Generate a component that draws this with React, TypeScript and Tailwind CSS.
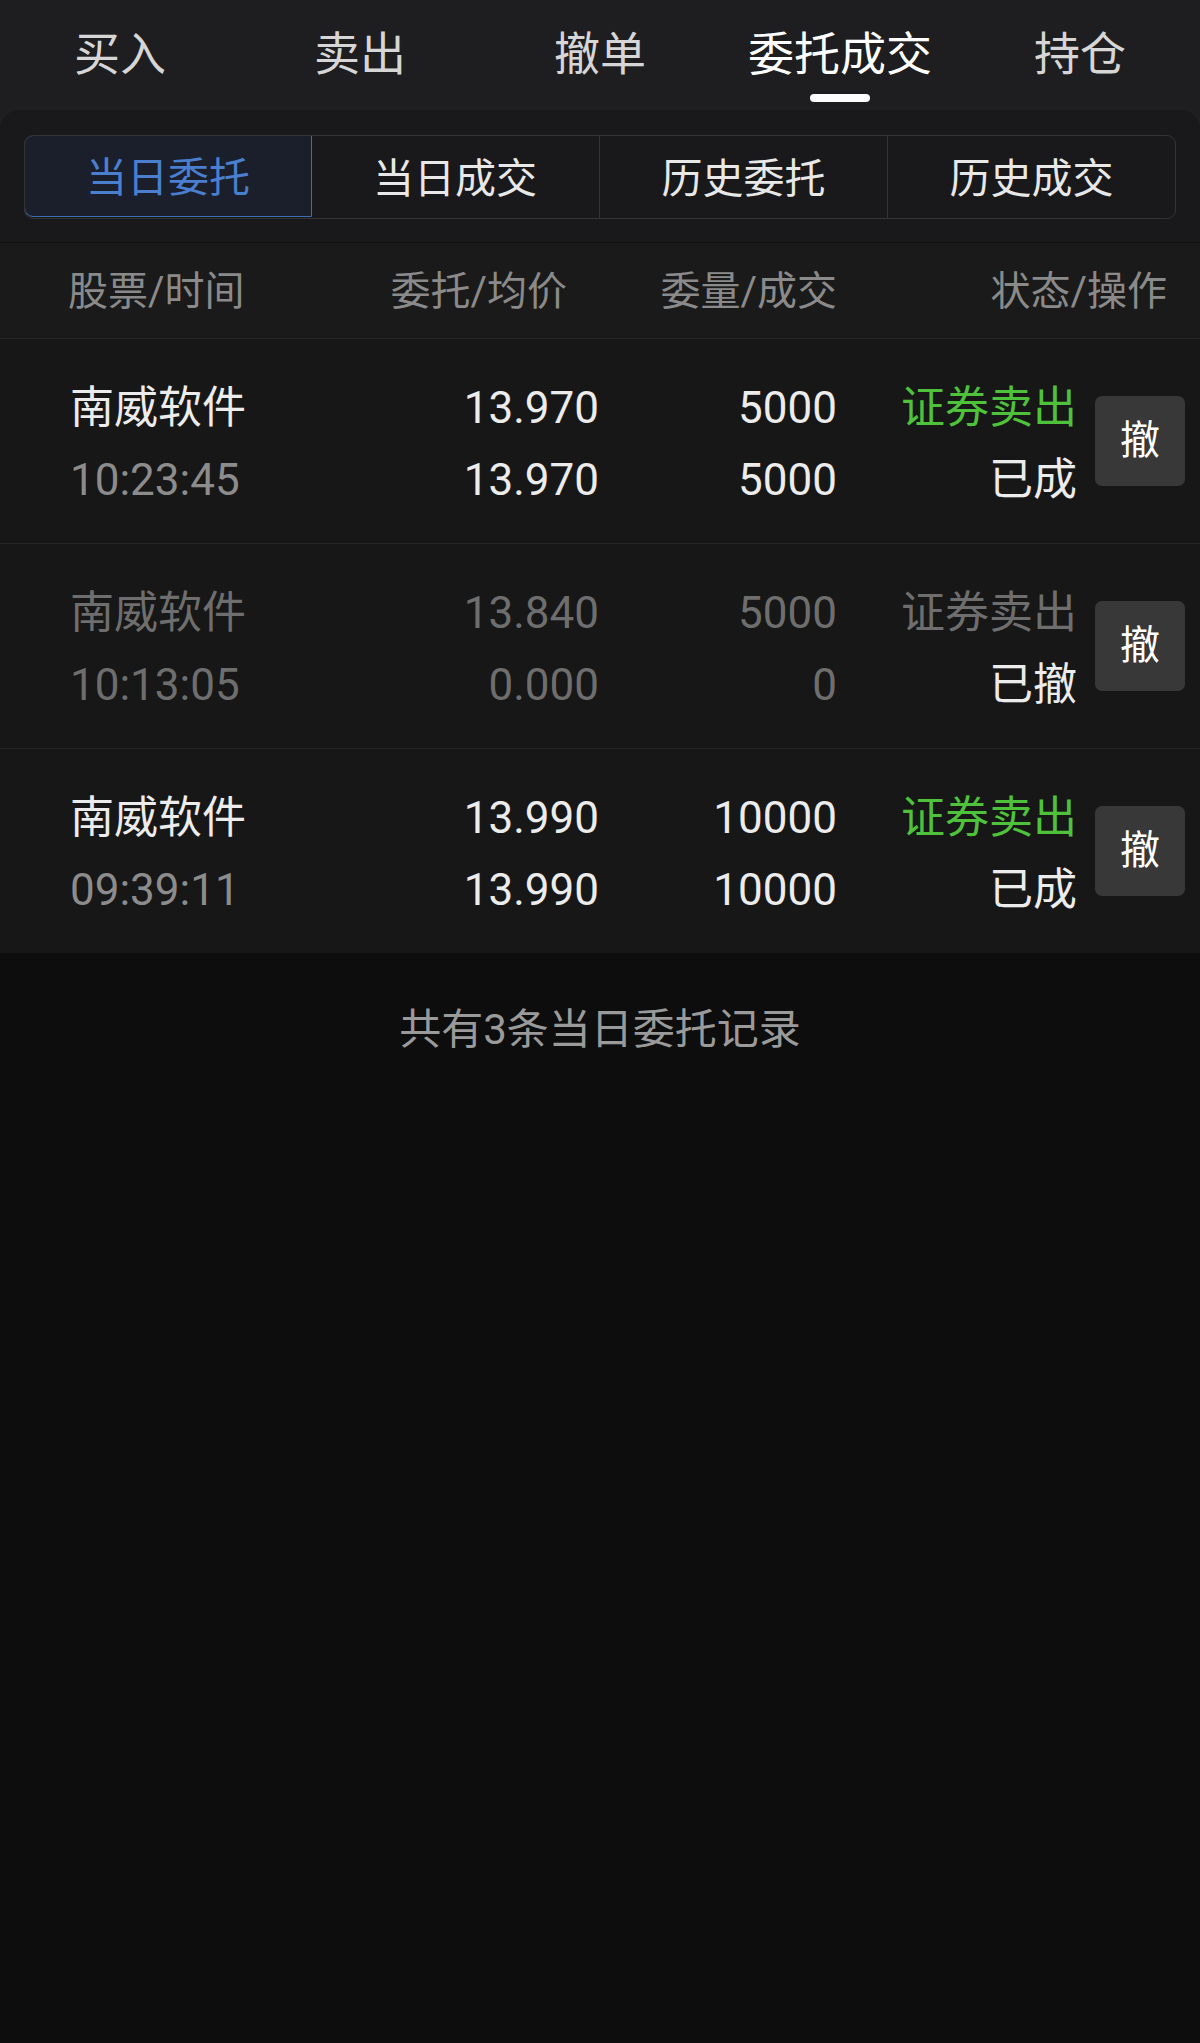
import React from "react";

const FONT = { fontFamily: 'Roboto, "Noto Sans CJK SC", "Noto Sans", sans-serif' };

type Row = {
  name: string;
  time: string;
  price: string;
  avg: string;
  qty: string;
  deal: string;
  status: string;
  state: string;
  dim: boolean;
};

const rows: Row[] = [
  { name: "南威软件", time: "10:23:45", price: "13.970", avg: "13.970", qty: "5000", deal: "5000", status: "证券卖出", state: "已成", dim: false },
  { name: "南威软件", time: "10:13:05", price: "13.840", avg: "0.000", qty: "5000", deal: "0", status: "证券卖出", state: "已撤", dim: true },
  { name: "南威软件", time: "09:39:11", price: "13.990", avg: "13.990", qty: "10000", deal: "10000", status: "证券卖出", state: "已成", dim: false },
];

const tabs = ["买入", "卖出", "撤单", "委托成交", "持仓"];
const segs = ["当日委托", "当日成交", "历史委托", "历史成交"];

export default function App() {
  return (
    <div className="w-[1200px] min-h-[2043px] bg-[#0d0d0d]" style={FONT}>
      {/* top nav */}
      <div className="bg-[#1e1e20] h-[110px] flex">
        {tabs.map((t, i) => (
          <div key={t} className="w-[240px] h-[110px] flex flex-col items-center">
            <div
              className={`h-[56px] mt-[26px] leading-[56px] text-[46px] ${i === 3 ? "text-white" : "text-[#d6d6d6]"}`}
            >
              {t}
            </div>
            {i === 3 && <div className="mt-[12px] w-[60px] h-[8px] rounded-full bg-white" />}
          </div>
        ))}
      </div>

      {/* panel */}
      <div className="bg-[#1e1e20]">
        <div className="bg-[#19191b] rounded-t-[20px] pt-[25px] pb-[23px] px-[24px]">
          <div className="flex h-[84px] rounded-[9px] border border-[#343436] overflow-hidden">
            {segs.map((s, i) =>
              i === 0 ? (
                <div
                  key={s}
                  className="w-[288px] h-full flex items-center justify-center pt-[6px] text-[41px] text-[#4a7fd0] bg-[#1a1f2b] border border-[#3e6cb0] rounded-l-[9px] -m-px"
                >
                  {s}
                </div>
              ) : (
                <div
                  key={s}
                  className={`w-[288px] h-full flex items-center justify-center pt-[6px] text-[41px] text-[#e8e8e8] ${i > 1 ? "border-l border-[#343436]" : ""}`}
                >
                  {s}
                </div>
              )
            )}
          </div>
        </div>
      </div>

      {/* header */}
      <div className="border-t border-[#111112] bg-[#1a1a1a] h-[97px] flex items-center pl-[68px] pt-[2px] text-[40px] text-[#8a8a8a] border-b border-b-[#262626]">
        <div className="w-[232px]">股票/时间</div>
        <div className="w-[267px] text-right">委托/均价</div>
        <div className="w-[270px] text-right">委量/成交</div>
        <div className="w-[330px] text-right">状态/操作</div>
      </div>

      {/* rows */}
      {rows.map((r, idx) => {
        const main = r.dim ? "text-[#6e6e6e]" : "text-[#ececec]";
        const sub = r.dim ? "text-[#6e6e6e]" : "text-[#8c8c8c]";
        const nums = r.dim ? "text-[#6e6e6e]" : "text-[#ececec]";
        return (
          <div
            key={idx}
            className={`bg-[#171717] flex items-center pl-[70px] pt-[33px] pb-[27px] ${idx < rows.length - 1 ? "border-b border-[#262626]" : ""}`}
          >
            <div className="w-[230px] text-[44px] leading-[72px]">
              <div className={main}>{r.name}</div>
              <div className={sub}>{r.time}</div>
            </div>
            <div className={`w-[299px] text-right text-[44px] leading-[72px] ${nums}`}>
              <div>{r.price}</div>
              <div>{r.avg}</div>
            </div>
            <div className={`w-[238px] text-right text-[44px] leading-[72px] ${nums}`}>
              <div>{r.qty}</div>
              <div>{r.deal}</div>
            </div>
            <div className="w-[240px] text-right text-[44px] leading-[72px]">
              <div className={r.dim ? "text-[#6e6e6e]" : "text-[#4fc23b]"}>{r.status}</div>
              <div className="text-[#ececec]">{r.state}</div>
            </div>
            <div className="ml-[18px] -mt-[6px] w-[90px] h-[90px] rounded-[7px] bg-[#383838] flex items-center justify-center text-[40px] text-white">
              撤
            </div>
          </div>
        );
      })}

      {/* footer */}
      <div className="pt-[52px] text-center text-[42px] leading-[50px] text-[#9a9a9a]">共有3条当日委托记录</div>
    </div>
  );
}
